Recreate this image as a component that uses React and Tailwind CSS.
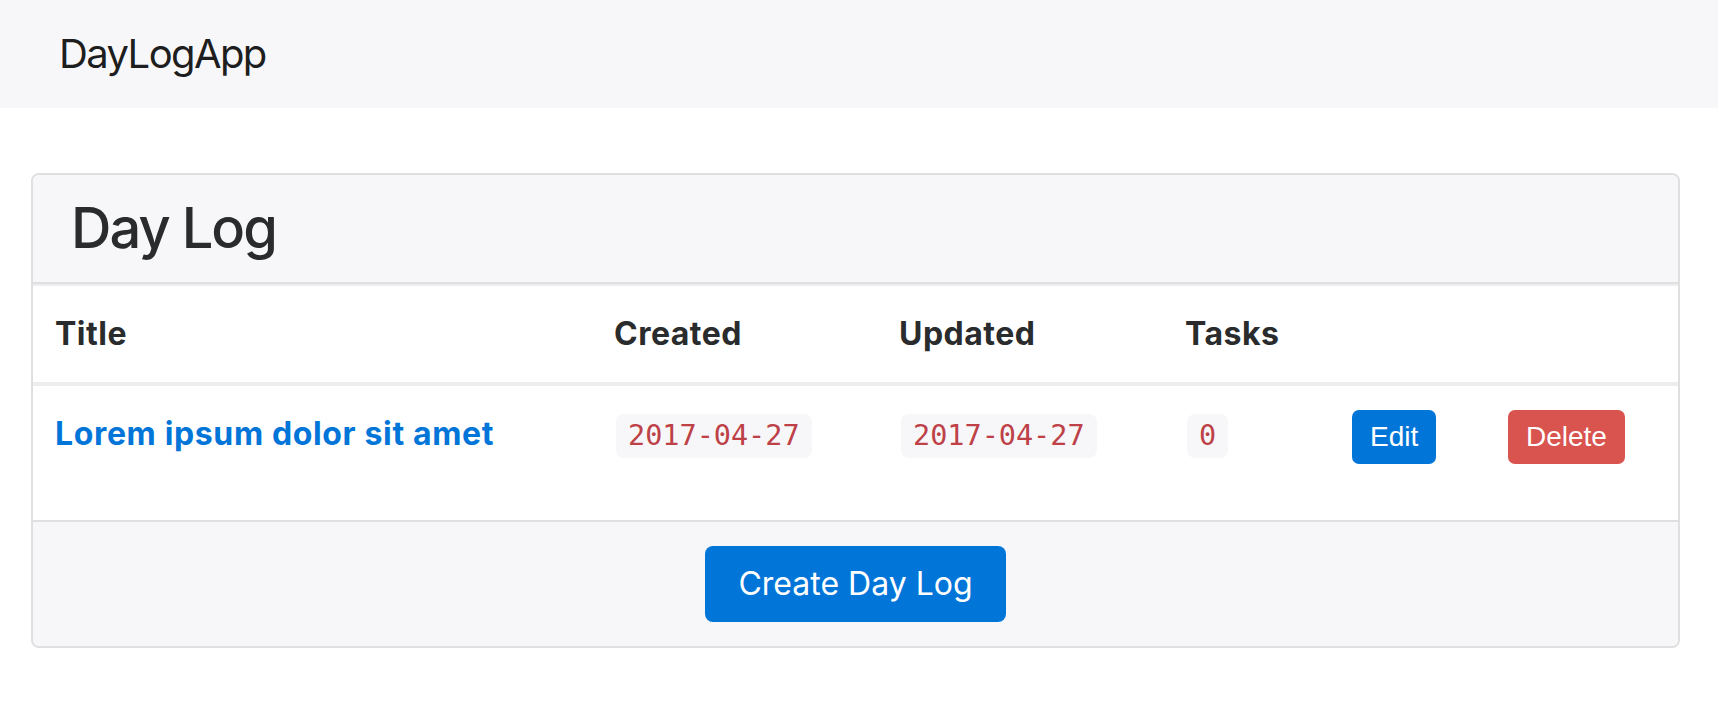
import React from 'react';

const logs = [
  { id: 1, title: 'Lorem ipsum dolor sit amet', created: '2017-04-27', updated: '2017-04-27', tasks: 0 }
];

const Code = ({ children }) => (
  <span className="inline-block align-top mt-[4px] h-[44px] leading-[44px] px-[12px] rounded-[8px] bg-[#f7f7f9] text-[#bd4147] text-[28.5px] tracking-normal font-['DejaVu_Sans_Mono',monospace]">
    {children}
  </span>
);

const App = () => {
  return (
    <div className="min-h-screen bg-white text-[#292b2c] font-['Inter',sans-serif]">
      {/* Navbar */}
      <nav className="bg-[#f7f7f9] py-[24px] pl-[59px]">
        <a href="#" className="text-[40px] leading-[60px] tracking-[-0.04em] text-black/90">DayLogApp</a>
      </nav>

      <div className="pl-[31px] pr-[38px] pt-[65px]">
        <div className="border-2 border-[#dfdfdf] rounded-[8px] overflow-hidden">
          {/* Card header */}
          <div className="bg-[#f7f7f9] px-[38px] py-[23px] border-b-2 border-[#dfdfdf]">
            <h3 className="text-[56px] leading-[61px] tracking-[-0.035em] font-medium">Day Log</h3>
          </div>

          {/* Table */}
          <table className="w-full table-fixed border-collapse mb-[32px]">
            <thead>
              <tr className="text-left text-[32px] leading-[48px] font-bold tracking-[0.015em]">
                <th className="w-[559px] pl-[22px] pr-[24px] py-[24px] border-t-2 border-b-4 border-[#eceeef]">Title</th>
                <th className="w-[285px] pl-[22px] pr-[24px] py-[24px] border-t-2 border-b-4 border-[#eceeef]">Created</th>
                <th className="w-[286px] pl-[22px] pr-[24px] py-[24px] border-t-2 border-b-4 border-[#eceeef]">Updated</th>
                <th className="w-[165px] pl-[22px] pr-[24px] py-[24px] border-t-2 border-b-4 border-[#eceeef]">Tasks</th>
                <th className="w-[156px] p-[24px] border-t-2 border-b-4 border-[#eceeef]"></th>
                <th className="p-[24px] border-t-2 border-b-4 border-[#eceeef]"></th>
              </tr>
            </thead>
            <tbody>
              {logs.map((log) => (
                <tr key={log.id} className="text-[32px] leading-[48px] align-top">
                  <td className="pl-[22px] pr-[24px] py-[24px]">
                    <a href="#" className="font-bold tracking-[0.02em] text-[#0275d8]">{log.title}</a>
                  </td>
                  <td className="p-[24px]"><Code>{log.created}</Code></td>
                  <td className="p-[24px]"><Code>{log.updated}</Code></td>
                  <td className="p-[24px]"><Code>{log.tasks}</Code></td>
                  <td className="p-[24px]">
                    <button className="h-[54px] px-[18px] rounded-[7px] bg-[#0275d8] text-white text-[28px] leading-[54px] font-['Liberation_Sans',Arial,sans-serif]">
                      Edit
                    </button>
                  </td>
                  <td className="p-[24px]">
                    <button className="h-[54px] px-[18px] rounded-[7px] bg-[#d9534f] text-white text-[28px] leading-[54px] font-['Liberation_Sans',Arial,sans-serif]">
                      Delete
                    </button>
                  </td>
                </tr>
              ))}
            </tbody>
          </table>

          {/* Card footer */}
          <div className="bg-[#f7f7f9] border-t-2 border-[#dfdfdf] py-[24px] flex justify-center">
            <button className="h-[76px] px-[33px] rounded-[8px] bg-[#0275d8] text-white text-[32px] leading-[40px]">
              Create Day Log
            </button>
          </div>
        </div>
      </div>
    </div>
  );
};

export default App;
